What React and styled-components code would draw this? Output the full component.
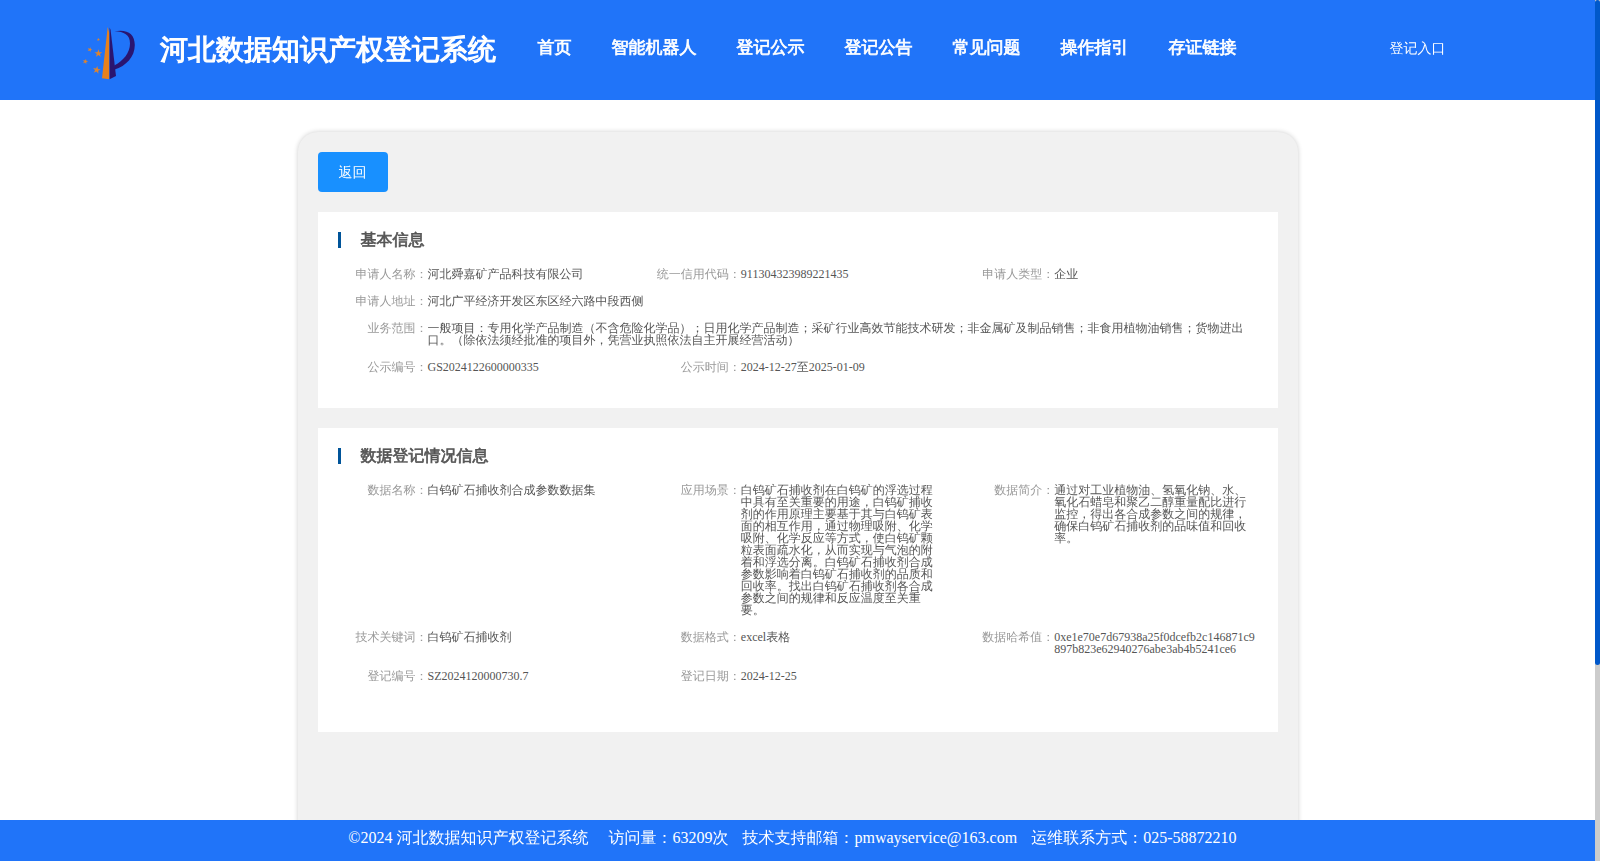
import React from "react";
import styled, { createGlobalStyle, css } from "styled-components";

const GlobalStyle = createGlobalStyle`
  * { box-sizing: border-box; }
  html, body { margin: 0; padding: 0; height: 100%; overflow: hidden; }
  body {
    font-family: "Liberation Serif", "WenQuanYi Zen Hei", "WenQuanYi Micro Hei", "Noto Sans CJK JP", serif;
    line-height: 1;
    color: #555;
    background: #fff;
  }
`;

/* The CJK face has a single weight, so headings are thickened by a stroke. */
const heavy = css`
  font-weight: bold;
  -webkit-text-stroke: 0.042em currentColor;
`;

const Page = styled.div`
  display: flex;
  height: 861px;
  width: 1600px;
`;

const Main = styled.div`
  display: flex;
  flex-direction: column;
  width: 1595px;
  height: 861px;
`;

const Scrollbar = styled.div`
  width: 5px;
  background: #ccc;
`;

const Thumb = styled.div`
  height: 665px;
  border-radius: 3px;
  background: #0058ca;
`;

const Header = styled.header`
  display: flex;
  flex: none;
  align-items: flex-start;
  height: 100px;
  padding-left: 76px;
  background: #2074f9;
  color: #fff;
`;

const Logo = styled.svg`
  flex: none;
  width: 70px;
  height: 66px;
  margin-top: 20px;
`;

const SiteTitle = styled.h1`
  ${heavy}
  width: 377.5px;
  margin: 36px 0 0 14px;
  font-size: 28px;
  line-height: 28px;
  white-space: nowrap;
`;

const Nav = styled.nav`
  display: flex;
  gap: 40px;
  width: 852px;
  margin-top: 39px;
`;

const NavItem = styled.a`
  ${heavy}
  font-size: 17px;
  line-height: 17px;
  white-space: nowrap;
`;

const Entry = styled.a`
  margin-top: 42px;
  font-size: 14px;
  line-height: 14px;
`;

const Body = styled.main`
  flex: 1;
  min-height: 0;
  padding-top: 32px;
  overflow: hidden;
`;

const Card = styled.div`
  width: 1000px;
  height: 760px;
  margin: 0 auto;
  padding: 20px;
  border-radius: 20px;
  background: #f1f1f1;
  box-shadow: 0 0 5px rgba(0, 0, 0, 0.2);
`;

const BackButton = styled.button`
  display: block;
  width: 70px;
  height: 40px;
  margin: 0 0 20px;
  padding: 2px 0 0;
  border: 0;
  border-radius: 4px;
  background: #1890ff;
  color: #fff;
  font-family: inherit;
  font-size: 14px;
`;

const Section = styled.section`
  height: ${(p) => p.$height}px;
  margin-bottom: 20px;
  padding: 20px 0 20px 20px;
  background: #fff;
`;

const SectionTitle = styled.h2`
  ${heavy}
  margin: 0 0 20px;
  padding-left: 20px;
  border-left: 3px solid #005499;
  font-size: 16px;
  line-height: 16px;
`;

const Fields = styled.div`
  display: grid;
  grid-template-columns: repeat(3, 1fr);
  row-gap: 15px;
`;

const Field = styled.div`
  display: flex;
  grid-column: ${(p) => (p.$wide ? "1 / -1" : "auto")};
  min-width: 0;
  padding-right: 20px;
  font-size: 12px;
  line-height: 12px;
`;

const Label = styled.span`
  flex: none;
  width: 90px;
  text-align: right;
  color: #999;
`;

const Value = styled.span`
  flex: 1;
  min-width: 0;
  word-break: break-all;
`;

const Footer = styled.footer`
  display: flex;
  flex: none;
  height: 41px;
  padding: 10px 0 0 348.3px;
  background: #2074f9;
  color: #fff;
  font-size: 16px;
  line-height: 16px;
  white-space: nowrap;
`;

const FooterItem = styled.span`
  margin-right: ${(p) => p.$gap || 0}px;
`;

const STAR = "0,-1 .24,-.31 .95,-.31 .38,.12 .59,.81 0,.4 -.59,.81 -.38,.12 -.95,-.31 -.24,-.31";
const STARS = [
  [22.4, 19.5, 1.8, 10],
  [13.8, 29.6, 2.6, 20],
  [22.4, 33.4, 4.1, 0],
  [9.3, 41.5, 2.9, 15],
  [20.7, 50, 4.1, 10],
];

const NAV = ["首页", "智能机器人", "登记公示", "登记公告", "常见问题", "操作指引", "存证链接"];

const BASIC = [
  { label: "申请人名称", value: "河北舜嘉矿产品科技有限公司" },
  { label: "统一信用代码", value: "911304323989221435" },
  { label: "申请人类型", value: "企业" },
  { label: "申请人地址", value: "河北广平经济开发区东区经六路中段西侧", wide: true },
  {
    label: "业务范围",
    value:
      "一般项目：专用化学产品制造（不含危险化学品）；日用化学产品制造；采矿行业高效节能技术研发；非金属矿及制品销售；非食用植物油销售；货物进出口。（除依法须经批准的项目外，凭营业执照依法自主开展经营活动）",
    wide: true,
  },
  { label: "公示编号", value: "GS2024122600000335" },
  { label: "公示时间", value: "2024-12-27至2025-01-09" },
];

const DATA = [
  { label: "数据名称", value: "白钨矿石捕收剂合成参数数据集" },
  {
    label: "应用场景",
    value:
      "白钨矿石捕收剂在白钨矿的浮选过程中具有至关重要的用途，白钨矿捕收剂的作用原理主要基于其与白钨矿表面的相互作用，通过物理吸附、化学吸附、化学反应等方式，使白钨矿颗粒表面疏水化，从而实现与气泡的附着和浮选分离。白钨矿石捕收剂合成参数影响着白钨矿石捕收剂的品质和回收率。找出白钨矿石捕收剂各合成参数之间的规律和反应温度至关重要。",
  },
  {
    label: "数据简介",
    value:
      "通过对工业植物油、氢氧化钠、水、氧化石蜡皂和聚乙二醇重量配比进行监控，得出各合成参数之间的规律，确保白钨矿石捕收剂的品味值和回收率。",
  },
  { label: "技术关键词", value: "白钨矿石捕收剂" },
  { label: "数据格式", value: "excel表格" },
  { label: "数据哈希值", value: "0xe1e70e7d67938a25f0dcefb2c146871c9897b823e62940276abe3ab4b5241ce6" },
  { label: "登记编号", value: "SZ2024120000730.7" },
  { label: "登记日期", value: "2024-12-25" },
];

function InfoSection({ title, fields, height }) {
  return (
    <Section $height={height}>
      <SectionTitle>{title}</SectionTitle>
      <Fields>
        {fields.map((f) => (
          <Field key={f.label} $wide={f.wide}>
            <Label>{f.label}：</Label>
            <Value>{f.value}</Value>
          </Field>
        ))}
      </Fields>
    </Section>
  );
}

export default function App() {
  return (
    <Page>
      <GlobalStyle />
      <Main>
        <Header>
          <Logo viewBox="0 0 70 66">
            <path d="M31.7 7 L33.2 13 V59.3 L26 58.3 Z" fill="#e8811c" />
            <path d="M33.6 7.5 L34.6 10 L40 56 L33.6 59.3 Z" fill="#2a1570" />
            <path
              d="M38.5 11.3 C51 9 58.8 13.5 58.8 25 C58.8 37 50 46 38.6 49.5 L38.2 45.5 C47 41 54 33 54 23.5 C54 14.5 48 11.8 38.5 11.3 Z"
              fill="#2a1570"
            />
            {STARS.map(([x, y, r, a]) => (
              <polygon
                key={`${x}-${y}`}
                points={STAR}
                fill="#dd8430"
                transform={`translate(${x} ${y}) rotate(${a}) scale(${r})`}
              />
            ))}
          </Logo>
          <SiteTitle>河北数据知识产权登记系统</SiteTitle>
          <Nav>
            {NAV.map((n) => (
              <NavItem key={n}>{n}</NavItem>
            ))}
          </Nav>
          <Entry>登记入口</Entry>
        </Header>
        <Body>
          <Card>
            <BackButton>返回</BackButton>
            <InfoSection title="基本信息" fields={BASIC} height={196} />
            <InfoSection title="数据登记情况信息" fields={DATA} height={304} />
          </Card>
        </Body>
        <Footer>
          <FooterItem $gap={20}>©2024 河北数据知识产权登记系统</FooterItem>
          <FooterItem $gap={14}>访问量：63209次</FooterItem>
          <FooterItem $gap={14}>技术支持邮箱：pmwayservice@163.com</FooterItem>
          <FooterItem>运维联系方式：025-58872210</FooterItem>
        </Footer>
      </Main>
      <Scrollbar>
        <Thumb />
      </Scrollbar>
    </Page>
  );
}
